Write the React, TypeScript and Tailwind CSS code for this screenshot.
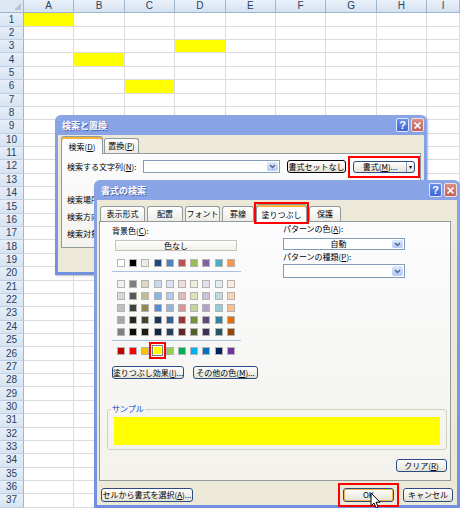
import { Fragment } from 'react';
import type { ReactNode } from 'react';

const COLS = ['A', 'B', 'C', 'D', 'E', 'F', 'G', 'H', 'I'];
// row number -> column index of the yellow cell
const FILLED: Record<number, number> = { 1: 0, 3: 3, 4: 1, 6: 2 };

const THEME = ['#ffffff', '#000000', '#eeece1', '#1f497d', '#4f81bd', '#c0504d', '#9bbb59', '#8064a2', '#4bacc6', '#f79646'];
const TINTS = [
  ['#f2f2f2', '#7f7f7f', '#ddd9c3', '#c6d9f0', '#dbe5f1', '#f2dcdb', '#ebf1dd', '#e5e0ec', '#dbeef3', '#fdeada'],
  ['#d8d8d8', '#595959', '#c4bd97', '#8db3e2', '#b8cce4', '#e5b9b7', '#d7e3bc', '#ccc1d9', '#b7dde8', '#fbd5b5'],
  ['#bfbfbf', '#3f3f3f', '#938953', '#548dd4', '#95b3d7', '#d99694', '#c3d69b', '#b2a2c7', '#92cddc', '#fac08f'],
  ['#a5a5a5', '#262626', '#494429', '#17365d', '#366092', '#953734', '#76923c', '#5f497a', '#31859b', '#e36c09'],
  ['#7f7f7f', '#0c0c0c', '#1d1b10', '#0f243e', '#244061', '#632423', '#4f6128', '#3f3151', '#205867', '#974806'],
];
const STANDARD = ['#c00000', '#ff0000', '#ffc000', '#ffff00', '#92d050', '#00b050', '#00b0f0', '#0070c0', '#002060', '#7030a0'];

function Sheet() {
  const rows = Array.from({ length: 37 }, (_, i) => i + 1);
  return (
    <div className="grid grid-cols-[24px_repeat(8,50.4px)_1fr] auto-rows-[13.37px] font-['Liberation_Sans',sans-serif] text-[10px] leading-none text-[#27415f]">
      <div className="relative border-r border-b border-[#9eb6ce] bg-[#dde7f3]">
        <span className="absolute right-[2px] bottom-[2px] border-b-[7px] border-l-[7px] border-l-transparent border-b-[#b4c4d8]" />
      </div>
      {COLS.map((c) => (
        <div key={c} className="flex items-center justify-center border-r border-b border-[#9eb6ce] bg-linear-to-b from-[#eaf1fa] to-[#d6e2f1]">
          {c}
        </div>
      ))}
      {rows.map((r) => (
        <Fragment key={r}>
          <div className="flex items-center justify-center border-r border-b border-r-[#9eb6ce] border-b-[#bfd0e4] bg-linear-to-b from-[#e6eef9] to-[#d8e4f2]">
            {r}
          </div>
          {COLS.map((c, i) => (
            <div key={c} className={`border-r border-b border-[#dadcdd] ${FILLED[r] === i ? 'bg-[#ffff00]' : 'bg-white'}`} />
          ))}
        </Fragment>
      ))}
    </div>
  );
}

function TitleButtons() {
  return (
    <div className="flex gap-[2px]">
      <span className="flex h-[14px] w-[13px] items-center justify-center rounded-[2px] border border-[#dfe6fa] bg-linear-to-b from-[#6d8fe8] to-[#3f67d6] font-['Liberation_Sans',sans-serif] text-[11px] font-bold leading-none text-white">
        ?
      </span>
      <span className="flex h-[14px] w-[13px] items-center justify-center rounded-[2px] border border-[#f1dede] bg-linear-to-b from-[#d98e84] to-[#c0605a]">
        <svg width="9" height="9" viewBox="0 0 9 9">
          <path d="M1.5 1.5l6 6M7.5 1.5l-6 6" stroke="#fff" strokeWidth="1.6" />
        </svg>
      </span>
    </div>
  );
}

function Window({ title, className, children }: { title: string; className: string; children: ReactNode }) {
  return (
    <div className={`absolute flex flex-col rounded-t-[6px] bg-linear-to-b from-[#8aa5e6] to-[#7290e0] px-[3px] pb-[3px] shadow-[1px_1px_2px_rgba(0,0,0,0.25)] ${className}`}>
      <div className="flex h-[20px] shrink-0 items-center justify-between pl-[4px]">
        <span className="text-[9px] font-bold leading-none text-white [text-shadow:1px_1px_0_#4a67b5]">{title}</span>
        <TitleButtons />
      </div>
      <div className="flex flex-1 flex-col whitespace-nowrap bg-[#ece9d8] text-[8px] leading-none text-black">{children}</div>
    </div>
  );
}

// red annotation rectangle drawn round a control
function Mark({ children, offset }: { children: ReactNode; offset: string }) {
  return <div className={`flex outline-2 outline-[#ff0000] ${offset}`}>{children}</div>;
}

function Btn({ children, className = '' }: { children: ReactNode; className?: string }) {
  return (
    <button
      type="button"
      className={`flex items-center justify-center whitespace-nowrap rounded-[3px] border border-[#2c4b85] bg-linear-to-b from-white to-[#e4e2d6] text-[8px] leading-none text-black ${className}`}
    >
      {children}
    </button>
  );
}

function Arrow() {
  return (
    <span className="flex h-full w-[11px] items-center justify-center rounded-[2px] bg-linear-to-b from-[#dde8fe] to-[#b3c8f7]">
      <svg width="7" height="5" viewBox="0 0 7 5">
        <path d="M1 1l2.5 2.5L6 1" fill="none" stroke="#4d6185" strokeWidth="1.4" />
      </svg>
    </span>
  );
}

function Combo({ value = '', className = '' }: { value?: string; className?: string }) {
  return (
    <div className={`flex items-center border border-[#7f9db9] bg-white p-[1px] ${className}`}>
      <span className="flex-1 text-center leading-none">{value}</span>
      <Arrow />
    </div>
  );
}

function Tab({ children, active = false, className = '' }: { children: ReactNode; active?: boolean; className?: string }) {
  if (active) {
    return (
      <div
        className={`relative z-10 -mb-px flex h-[18px] items-center justify-center rounded-t-[3px] border border-b-0 border-[#919b9c] bg-[#fcfcfe] pt-[2px] shadow-[inset_0_2px_0_#f6b33d] ${className}`}
      >
        {children}
      </div>
    );
  }
  return (
    <div className={`flex h-[15px] items-center justify-center rounded-t-[3px] border border-b-0 border-[#919b9c] bg-linear-to-b from-white to-[#ecebe5] ${className}`}>
      {children}
    </div>
  );
}

function FindDialog() {
  return (
    <Window title="検索と置換" className="left-[55px] top-[115px] h-[160px] w-[372px]">
      <div className="flex flex-col px-[3px] pt-[4px]">
        <div className="flex h-[14px] items-end gap-[1px]">
          <Tab active className="h-[14px] w-[42px]">
            検索(<u>D</u>)
          </Tab>
          <Tab className="h-[11px] w-[35px]">
            置換(<u>P</u>)
          </Tab>
        </div>
        <div className="h-[95px] border border-[#919b9c] bg-linear-to-b from-[#fcfcfe] to-[#f4f3ee] px-[5px] pt-[6px]">
          <div className="flex h-[13px] items-center">
            <span className="w-[76px]">
              検索する文字列(<u>N</u>):
            </span>
            <div className="flex h-[13px] w-[138px] items-center justify-end border border-[#7f9db9] bg-white p-[1px]">
              <Arrow />
            </div>
            <Btn className="ml-[7px] h-[13px] w-[59px] border-black">書式セットなし</Btn>
            <div className="ml-[7px]">
              <Mark offset="outline-offset-[3px]">
                <Btn className="h-[12px] w-[62px]">
                  <span className="flex-1 text-center">
                    書式(<u>M</u>)...
                  </span>
                  <span className="flex h-full w-[8px] items-center justify-center border-l border-[#8c9bb5] text-[6px]">▾</span>
                </Btn>
              </Mark>
            </div>
          </div>
          <div className="mt-[23px] flex flex-col gap-[9px]">
            <span>検索場所(<u>H</u>):</span>
            <span>検索方向(<u>S</u>):</span>
            <span>検索対象(<u>L</u>):</span>
          </div>
        </div>
      </div>
    </Window>
  );
}

function Swatch({ color, selected = false }: { color: string; selected?: boolean }) {
  return (
    <div className="flex h-[9px] items-center justify-center">
      {selected ? (
        <span
          className="h-[11px] w-[11px] border border-[#7a7a7a] shadow-[inset_0_0_0_1px_#fff] outline-2 outline-offset-[1px] outline-[#ff0000]"
          style={{ backgroundColor: color }}
        />
      ) : (
        <span className="h-[8px] w-[8px] border border-[#b3b3b3]" style={{ backgroundColor: color }} />
      )}
    </div>
  );
}

function FormatDialog() {
  const tabs = [
    { label: '表示形式', w: 'w-[45px]' },
    { label: '配置', w: 'w-[36px]' },
    { label: 'フォント', w: 'w-[35px]' },
    { label: '罫線', w: 'w-[32px]' },
  ];
  return (
    <Window title="書式の検索" className="left-[94px] top-[180px] h-[328px] w-[366px]">
      <div className="flex flex-col pl-[2px] pr-[6px] pt-[3px]">
        <div className="flex h-[18px] items-end gap-[2px] pl-[1px]">
          {tabs.map((t) => (
            <Tab key={t.label} className={t.w}>
              {t.label}
            </Tab>
          ))}
          <div className="relative z-10 -mb-px flex">
            <Mark offset="outline-offset-0">
              <Tab active className="mb-0 w-[51px]">
                塗りつぶし
              </Tab>
            </Mark>
          </div>
          <Tab className="w-[32px]">保護</Tab>
        </div>
        <div className="flex h-[260px] flex-col border border-[#919b9c] bg-linear-to-b from-[#fcfcfe] to-[#f3f2ec]">
          <div className="flex">
            <div className="ml-[12px] flex w-[146px] flex-col">
              <span className="mt-[5px]">
                背景色(<u>C</u>):
              </span>
              <div className="ml-[3px] mt-[5px] flex h-[11px] w-[122px] items-center justify-center border border-[#c4c2b8] bg-linear-to-b from-white to-[#f0efe9]">
                色なし
              </div>
              <div className="ml-[3px] mt-[7px] grid w-[122px] grid-cols-10">
                {THEME.map((c) => (
                  <Swatch key={c} color={c} />
                ))}
              </div>
              <div className="mt-[4px] h-px w-[129px] bg-[#a9c3e7]" />
              <div className="ml-[3px] mt-[7px] grid w-[122px] grid-cols-10 gap-y-[3px]">
                {TINTS.flat().map((c, i) => (
                  <Swatch key={i} color={c} />
                ))}
              </div>
              <div className="mt-[4px] h-px w-[129px] bg-[#a9c3e7]" />
              <div className="ml-[3px] mt-[5px] grid w-[122px] grid-cols-10">
                {STANDARD.map((c, i) => (
                  <Swatch key={c} color={c} selected={i === 3} />
                ))}
              </div>
              <div className="mt-[11px] flex gap-[9px]">
                <Btn className="h-[13px] w-[72px]">
                  塗りつぶし効果(<u>I</u>)...
                </Btn>
                <Btn className="h-[13px] w-[65px]">
                  その他の色(<u>M</u>)...
                </Btn>
              </div>
            </div>
            <div className="ml-[25px] flex w-[122px] flex-col">
              <span className="mt-[3px]">
                パターンの色(<u>A</u>):
              </span>
              <Combo value="自動" className="mt-[5px] h-[12px]" />
              <span className="mt-[3px]">
                パターンの種類(<u>P</u>):
              </span>
              <Combo className="mt-[3px] h-[14px]" />
            </div>
          </div>
          <fieldset className="ml-[7px] mt-[26px] w-[340px] rounded-[3px] border border-[#d0d0bf] px-[6px] pb-[4px] pt-[4px]">
            <legend className="ml-[-3px] px-[1px] text-[#0046d5]">サンプル</legend>
            <div className="h-[28px] bg-[#ffff00]" />
          </fieldset>
          <Btn className="ml-auto mr-[3px] mt-[9px] h-[13px] w-[51px]">
            クリア(<u>R</u>)
          </Btn>
        </div>
        <div className="mt-[7px] flex items-center">
          <Btn className="ml-[2px] h-[14px] w-[92px]">
            セルから書式を選択(<u>A</u>)...
          </Btn>
          <div className="ml-auto">
            <Mark offset="outline-offset-[3px]">
              <Btn className="h-[14px] w-[51px] shadow-[inset_0_0_0_1px_#f5b54d]">OK</Btn>
            </Mark>
          </div>
          <Btn className="ml-[9px] mr-[-2px] h-[14px] w-[50px]">キャンセル</Btn>
        </div>
      </div>
    </Window>
  );
}

function Cursor() {
  return (
    <svg className="absolute left-[370px] top-[492px]" width="12" height="18" viewBox="0 0 12 18">
      <path d="M1 1v13l3-3 2.2 5 2-1-2.2-4.8H10z" fill="#fff" stroke="#000" strokeWidth="1" strokeLinejoin="round" />
    </svg>
  );
}

export default function App() {
  return (
    <div className="relative h-[508px] w-[460px] overflow-hidden bg-white font-['Noto_Sans_CJK_JP',sans-serif]">
      <Sheet />
      <FindDialog />
      <FormatDialog />
      <Cursor />
    </div>
  );
}
